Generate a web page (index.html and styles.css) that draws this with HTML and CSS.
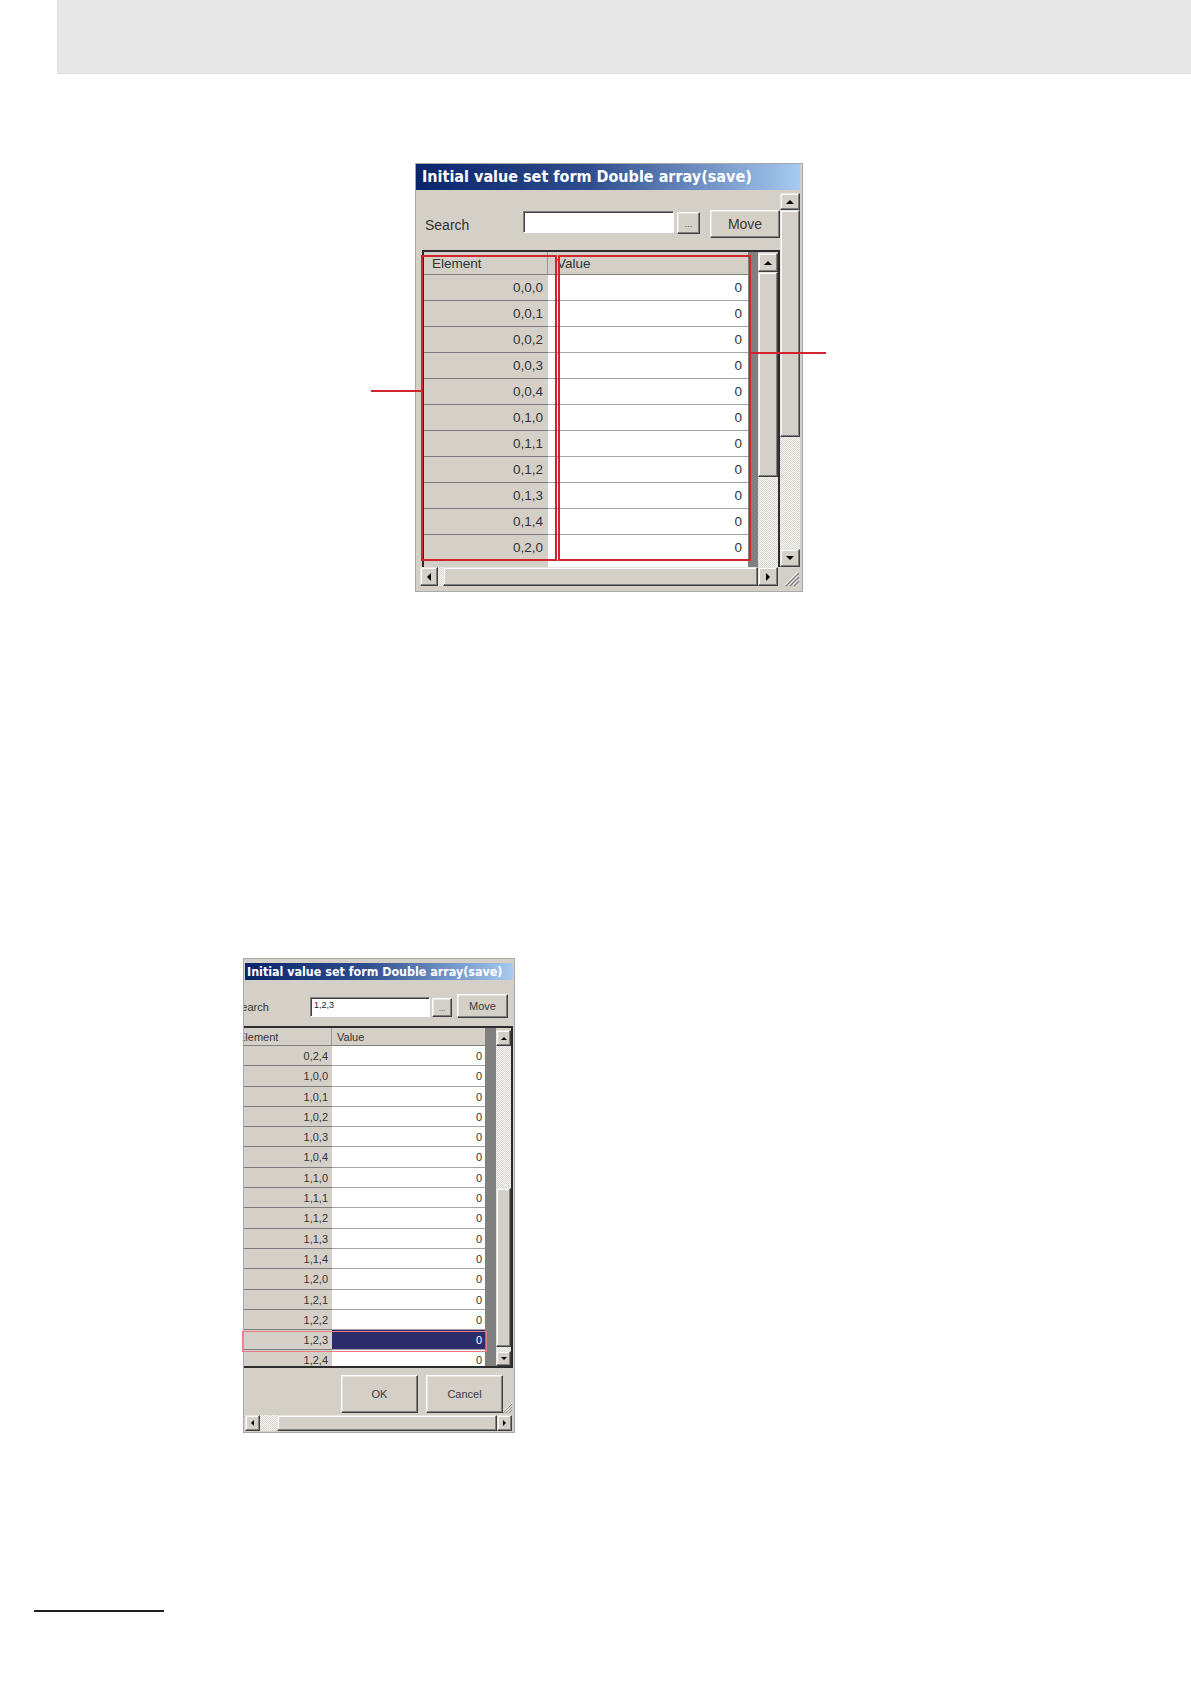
FILE: index.html
```html
<!DOCTYPE html>
<html lang="en">
<head>
<meta charset="utf-8">
<title>Initial value set form</title>
<link rel="stylesheet" href="styles.css">
</head>
<body>
<div class="band"></div>

<section class="fig fig1">
  <div class="dlg dlg1">
    <div class="title">Initial value set form Double array(save)</div>
    <div class="main">
      <div class="content">
        <div class="search">
          <span class="lbl">Search</span>
          <span class="input"></span>
          <span class="btn dots">...</span>
          <span class="btn move">Move</span>
        </div>
        <div class="grid">
          <div class="cells">
            <div class="hdr"><span class="h-el">Element</span><span class="h-val">Value</span></div>
            <div class="row"><span class="el">0,0,0</span><span class="val">0</span></div>
            <div class="row"><span class="el">0,0,1</span><span class="val">0</span></div>
            <div class="row"><span class="el">0,0,2</span><span class="val">0</span></div>
            <div class="row"><span class="el">0,0,3</span><span class="val">0</span></div>
            <div class="row"><span class="el">0,0,4</span><span class="val">0</span></div>
            <div class="row"><span class="el">0,1,0</span><span class="val">0</span></div>
            <div class="row"><span class="el">0,1,1</span><span class="val">0</span></div>
            <div class="row"><span class="el">0,1,2</span><span class="val">0</span></div>
            <div class="row"><span class="el">0,1,3</span><span class="val">0</span></div>
            <div class="row"><span class="el">0,1,4</span><span class="val">0</span></div>
            <div class="row"><span class="el">0,2,0</span><span class="val">0</span></div>
            <div class="row"><span class="el"></span><span class="val"></span></div>
          </div>
          <div class="vs inner">
            <span class="sb up"></span>
            <span class="thumb"></span>
            <span class="track t-fill"></span>
          </div>
        </div>
      </div>
      <div class="vs outer">
        <span class="sb up"></span>
        <span class="thumb"></span>
        <span class="track"></span>
        <span class="sb down"></span>
      </div>
    </div>
    <div class="hs">
      <span class="sb left"></span>
      <span class="track"></span>
      <span class="thumb"></span>
      <span class="sb right"></span>
      <span class="grip">
        <svg width="20" height="20" viewBox="0 0 20 20"><path d="M18 5L5 18M18 9L9 18M18 13L13 18" stroke="#ffffff" stroke-width="1"/><path d="M19 6L6 19M19 10L10 19M19 14L14 19" stroke="#808080" stroke-width="1.2"/></svg>
      </span>
    </div>
  </div>
  <span class="mark box-el"></span>
  <span class="mark box-val"></span>
  <span class="lead lead-l"></span>
  <span class="lead lead-r"></span>
</section>

<section class="fig fig2">
  <div class="dlg dlg2">
    <div class="title">Initial value set form Double array(save)</div>
    <div class="search">
      <span class="lbl">Search</span>
      <span class="input">1,2,3</span>
      <span class="btn dots">...</span>
      <span class="btn move">Move</span>
    </div>
    <div class="grid">
      <div class="cells">
        <div class="hdr"><span class="h-el">Element</span><span class="h-val">Value</span></div>
        <div class="row"><span class="el">0,2,4</span><span class="val">0</span></div>
        <div class="row"><span class="el">1,0,0</span><span class="val">0</span></div>
        <div class="row"><span class="el">1,0,1</span><span class="val">0</span></div>
        <div class="row"><span class="el">1,0,2</span><span class="val">0</span></div>
        <div class="row"><span class="el">1,0,3</span><span class="val">0</span></div>
        <div class="row"><span class="el">1,0,4</span><span class="val">0</span></div>
        <div class="row"><span class="el">1,1,0</span><span class="val">0</span></div>
        <div class="row"><span class="el">1,1,1</span><span class="val">0</span></div>
        <div class="row"><span class="el">1,1,2</span><span class="val">0</span></div>
        <div class="row"><span class="el">1,1,3</span><span class="val">0</span></div>
        <div class="row"><span class="el">1,1,4</span><span class="val">0</span></div>
        <div class="row"><span class="el">1,2,0</span><span class="val">0</span></div>
        <div class="row"><span class="el">1,2,1</span><span class="val">0</span></div>
        <div class="row"><span class="el">1,2,2</span><span class="val">0</span></div>
        <div class="row sel"><span class="el">1,2,3</span><span class="val">0</span></div>
        <div class="row"><span class="el">1,2,4</span><span class="val">0</span></div>
      </div>
      <div class="vs inner">
        <span class="sb up"></span>
        <span class="track t-a"></span>
        <span class="thumb"></span>
        <span class="track t-b"></span>
        <span class="sb down"></span>
      </div>
    </div>
    <div class="actions">
      <span class="btn ok">OK</span>
      <span class="btn cancel">Cancel</span>
      <span class="grip">
        <svg width="10" height="11" viewBox="0 0 10 11"><path d="M9 2L1 10M9 5L4 10M9 8L7 10" stroke="#ffffff" stroke-width="1"/><path d="M10 2L1 11M10 5L4 11M10 8L7 11" stroke="#808080" stroke-width="1"/></svg>
      </span>
    </div>
    <div class="hs">
      <span class="sb left"></span>
      <span class="track"></span>
      <span class="thumb"></span>
      <span class="sb right"></span>
    </div>
  </div>
  <span class="mark box-row"></span>
</section>

<div class="footline"></div>
</body>
</html>
```
FILE: styles.css
```css
* { box-sizing: border-box; }
html, body { margin: 0; padding: 0; }
body {
  background: #ffffff;
  width: 1191px;
  min-height: 1684px;
  font-family: "Liberation Sans", Arial, sans-serif;
  color: #333333;
}

.band {
  height: 74px;
  margin-left: 57px;
  background: #e8e8e8;
  border-left: 1px solid #dedede;
  border-bottom: 1px solid #dcdcdc;
}

.fig { position: relative; }
.fig1 { margin: 89px 0 0 415px; width: 388px; }
.fig2 { margin: 366px 0 0 243px; width: 272px; }
.footline { margin: 177px 0 0 34px; width: 130px; height: 2px; background: #231f20; }

/* ---------- generic dialog parts ---------- */
.dlg {
  background: #d4d0c8;
  border: 1px solid #a9a9a9;
  display: flex;
  flex-direction: column;
  overflow: hidden;
}
.title {
  flex: none;
  color: #ffffff;
  font-family: "DejaVu Sans Condensed", "DejaVu Sans", sans-serif;
  font-weight: bold;
  white-space: nowrap;
  overflow: hidden;
  background: linear-gradient(90deg, #0a246a 0%, #2e4d8e 45%, #a6caf0 100%);
}
.search { display: flex; align-items: flex-start; flex: none; }
.lbl { display: block; white-space: nowrap; color: #333; }
.input {
  display: block;
  background: #ffffff;
  border: 1px solid;
  border-color: #808080 #ffffff #ffffff #808080;
  box-shadow: inset 1px 1px #404040;
  color: #222;
}
.btn {
  display: flex;
  align-items: center;
  justify-content: center;
  background: #d4d0c8;
  border: 1px solid;
  border-color: #ffffff #404040 #404040 #ffffff;
  box-shadow: inset -1px -1px #808080, inset 1px 1px #e6e4de;
  color: #3a3a3a;
  flex: none;
}
.grid {
  display: flex;
  flex: none;
  overflow: hidden;
  border-style: solid;
  border-color: #2c2c2c;
}
.cells { background: #808080; overflow: hidden; flex: none; }
.hdr, .row { display: flex; }
.h-el, .h-val {
  display: block;
  background: #d4d0c8;
  border-bottom: 1px solid #808080;
  white-space: nowrap;
  overflow: hidden;
  color: #333;
}
.h-el { border-right: 1px solid #9a9a9a; }
.el, .val {
  display: block;
  text-align: right;
  border-bottom: 1px solid;
  white-space: nowrap;
  color: #333;
}
.el { background: #d4d0c8; border-bottom-color: #7c7c7c; }
.val { background: #ffffff; border-bottom-color: #a3a3a3; }
.row.sel .val { background: #2b2e6b; color: #ffffff; }

.vs { display: flex; flex-direction: column; flex: none; }
.hs { display: flex; flex: none; align-items: flex-start; }
.track {
  display: block;
  flex: none;
  background: repeating-conic-gradient(#d4d0c8 0 25%, #ffffff 0 50%) 0 0 / 2px 2px;
}
.t-fill { flex: 1; }
.thumb, .sb {
  display: block;
  flex: none;
  background: #d4d0c8;
  border: 1px solid;
  border-color: #e6e4de #404040 #404040 #e6e4de;
  box-shadow: inset -1px -1px #808080, inset 1px 1px #ffffff;
}
.sb { display: flex; align-items: center; justify-content: center; }
.sb::before { content: ""; width: 0; height: 0; border: 4px solid transparent; }
.up::before { border-top-width: 0; border-bottom-color: #000; }
.down::before { border-bottom-width: 0; border-top-color: #000; }
.left::before { border-left-width: 0; border-right-color: #000; }
.right::before { border-right-width: 0; border-left-color: #000; }
.grip { display: block; flex: none; line-height: 0; }

/* ---------- dialog 1 ---------- */
.dlg1 { width: 388px; height: 429px; padding: 0 2px 3px 0; }
.dlg1 .title { height: 26px; line-height: 26px; font-size: 16px; padding-left: 6px; }
.dlg1 .main { display: flex; height: 377px; flex: none; }
.dlg1 .content { width: 364px; display: flex; flex-direction: column; }
.dlg1 .search { height: 60px; padding: 20px 0 0 9px; }
.dlg1 .lbl { width: 98px; margin-top: 7px; font-size: 14px; line-height: 16px; }
.dlg1 .input { width: 151px; height: 22px; margin-top: 1px; margin-right: 3px; }
.dlg1 .dots { width: 23px; height: 22px; margin-top: 2px; margin-right: 10px; font-size: 9px; align-items: flex-end; padding-bottom: 4px; }
.dlg1 .move { width: 70px; height: 28px; font-size: 14px; }
.dlg1 .grid { margin-left: 6px; height: 317px; border-width: 2px 2px 0 2px; }
.dlg1 .cells { width: 334px; }
.dlg1 .hdr { height: 23px; font-size: 13.5px; line-height: 20px; }
.dlg1 .h-el { width: 124px; padding: 2px 0 0 8px; }
.dlg1 .h-val { width: 200px; padding: 2px 0 0 9px; }
.dlg1 .row { height: 26px; font-size: 13.5px; line-height: 26px; }
.dlg1 .el { width: 124px; padding-right: 5px; }
.dlg1 .val { width: 200px; padding-right: 6px; }
.dlg1 .inner { width: 20px; }
.dlg1 .inner .up { margin-top: 1px; height: 19px; }
.dlg1 .inner .thumb { height: 205px; }
.dlg1 .outer { width: 20px; padding-top: 3px; }
.dlg1 .outer .up { height: 17px; }
.dlg1 .outer .thumb { height: 227px; }
.dlg1 .outer .track { height: 112px; }
.dlg1 .outer .down { height: 18px; }
.dlg1 .hs { height: 21px; padding-left: 4px; }
.dlg1 .hs .left { width: 18px; height: 19px; }
.dlg1 .hs .track { width: 5px; height: 19px; }
.dlg1 .hs .thumb { width: 315px; height: 19px; }
.dlg1 .hs .right { width: 20px; height: 19px; }
.dlg1 .hs .grip { margin-left: 2px; width: 20px; height: 20px; }

/* annotations over dialog 1 */
.mark { position: absolute; display: block; border: 2px solid #d3242e; }
.box-el { left: 6px; top: 92px; width: 136px; height: 306px; }
.box-val { left: 143px; top: 92px; width: 193px; height: 306px; }
.lead { position: absolute; display: block; height: 2px; background: #d3242e; }
.lead-l { left: -44px; top: 227px; width: 50px; }
.lead-r { left: 336px; top: 189px; width: 75px; }

/* ---------- dialog 2 ---------- */
.dlg2 { width: 272px; height: 475px; padding: 4px 0 1px 0; }
.dlg2 .title { height: 17px; line-height: 17px; font-size: 12.4px; margin: 0 1px; padding-left: 2px; }
.dlg2 .search { height: 46px; overflow: hidden; }
.dlg2 .lbl { margin-left: -10px; width: 76px; margin-top: 21px; font-size: 11px; line-height: 13px; }
.dlg2 .input { width: 120px; height: 20px; margin-top: 17px; margin-right: 2px; font-size: 9px; line-height: 10px; padding: 2px 2px 0 3px; }
.dlg2 .dots { width: 20px; height: 19px; margin-top: 18px; margin-right: 5px; font-size: 8px; align-items: flex-end; padding-bottom: 3px; }
.dlg2 .move { width: 51px; height: 24px; margin-top: 14px; font-size: 11px; }
.dlg2 .grid { width: 269px; height: 342px; border-width: 2px 2px 2px 0; }
.dlg2 .cells { width: 252px; }
.dlg2 .hdr { height: 18px; font-size: 11px; line-height: 17px; }
.dlg2 .h-el { width: 88px; text-indent: -6px; padding-top: 1px; }
.dlg2 .h-val { width: 153px; padding: 1px 0 0 5px; }
.dlg2 .row { height: 20.3px; font-size: 11px; line-height: 20px; }
.dlg2 .el { width: 88px; padding-right: 4px; }
.dlg2 .val { width: 153px; padding-right: 3px; }
.dlg2 .inner { width: 15px; padding-top: 2px; }
.dlg2 .sb::before { border-width: 3px; }
.dlg2 .up::before { border-top-width: 0; }
.dlg2 .down::before { border-bottom-width: 0; }
.dlg2 .left::before { border-left-width: 0; }
.dlg2 .right::before { border-right-width: 0; }
.dlg2 .inner .up { height: 16px; }
.dlg2 .inner .t-a { height: 142px; }
.dlg2 .inner .thumb { height: 159px; }
.dlg2 .inner .t-b { height: 4px; }
.dlg2 .inner .down { height: 15px; }
.dlg2 .actions { display: flex; align-items: flex-start; height: 47px; flex: none; padding: 7px 0 0 97px; }
.dlg2 .ok, .dlg2 .cancel { width: 77px; height: 38px; font-size: 11px; }
.dlg2 .ok { margin-right: 8px; }
.dlg2 .actions .grip { width: 10px; height: 11px; margin: 27px 0 0 -1px; }
.dlg2 .hs { height: 16px; padding-left: 1px; }
.dlg2 .hs .left { width: 15px; height: 16px; }
.dlg2 .hs .track { width: 17px; height: 16px; }
.dlg2 .hs .thumb { width: 220px; height: 16px; }
.dlg2 .hs .right { width: 15px; height: 16px; }

.box-row { left: -1px; top: 373px; width: 245px; height: 21px; border: 1.5px solid #e87b86; }
```
